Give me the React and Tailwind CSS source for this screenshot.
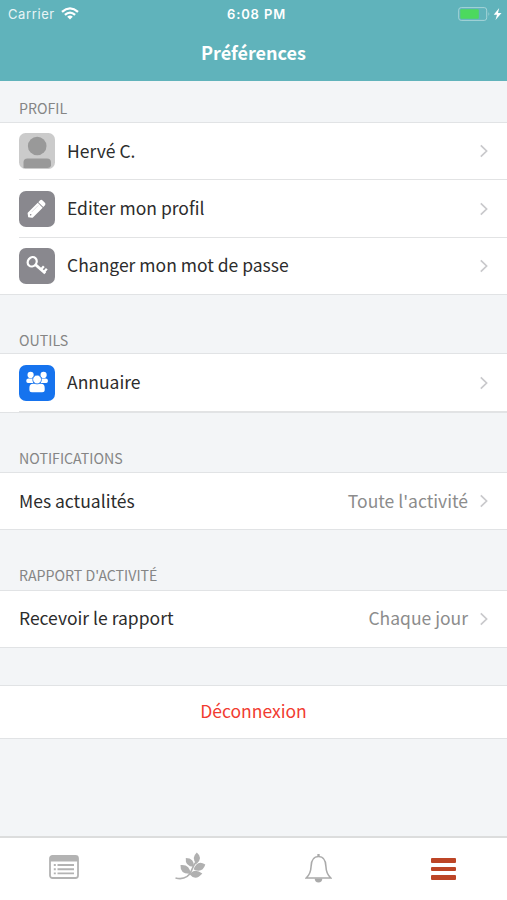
function Chevron() {
  return (
    <svg className="ml-[12px] mr-px h-[14px] w-[8px] shrink-0" viewBox="0 0 8 14" fill="none" stroke="#c9c9cc" strokeWidth="1.700">
      <path d="M.8 1.300 6.600 7 .8 12.700" />
    </svg>
  );
}

function Avatar() {
  return (
    <svg className="h-9 w-9" viewBox="0 0 36 36">
      <rect width="36" height="36" rx="6.500" fill="#cbcbcb" />
      <circle cx="18.200" cy="13" r="9.300" fill="#999" />
      <path d="M4.500 35v-5.500Q4.500 25.500 8.500 25.500H28Q32 25.500 32 29.500V33Q31 35 28.500 35Z" fill="#999" />
    </svg>
  );
}

function Pencil() {
  return (
    <svg className="h-9 w-9" viewBox="0 0 36 36">
      <rect width="36" height="36" rx="7" fill="#89888e" />
      <g transform="translate(9.200 26.200) rotate(-45)" fill="#fff">
        <path d="M0 0 2.200-3Q2.500-3.500 3.200-3.500H17V3.500H3.200Q2.500 3.500 2.200 3Z" />
        <path d="M17.800-3.500H20Q22-3.500 22-1.600V1.600Q22 3.500 20 3.500H17.800Z" />
        <path d="M6-1.200H15.500" stroke="#c9c8cd" strokeWidth=".6" />
        <circle cx="3.500" cy="0" r=".8" fill="#89888e" />
      </g>
    </svg>
  );
}

function Key() {
  return (
    <svg className="h-9 w-9" viewBox="0 0 36 36">
      <rect width="36" height="36" rx="7" fill="#89888e" />
      <g fill="none" stroke="#fff" transform="translate(13.200 13.800) rotate(41)">
        <ellipse rx="4.300" ry="4.900" strokeWidth="2.200" />
        <path d="M4.300 0H17.300" strokeWidth="2.700" />
        <path d="M11.700 0V-4.300M15.600 0V-4.300" strokeWidth="2.300" />
      </g>
    </svg>
  );
}

function People() {
  return (
    <svg className="h-9 w-9" viewBox="0 0 36 36">
      <rect width="36" height="36" rx="7" fill="#1673ee" />
      <g fill="#fff">
        <circle cx="11.600" cy="9.900" r="3.100" />
        <circle cx="24.600" cy="9.900" r="3.100" />
        <path d="M9.500 13.500H14V18H9Q7.300 18 7.300 16.300V15.500Q7.300 13.700 9.500 13.500ZM26.700 13.500H22V18H27.200Q28.900 18 28.900 16.300V15.500Q28.900 13.700 26.700 13.500Z" />
        <path d="M14 18.800H22Q25.700 18.800 25.700 23V24.700Q25.700 27.200 23.200 27.200H12.900Q10.400 27.200 10.400 24.700V23Q10.400 18.800 14 18.800Z" />
        <circle cx="18.100" cy="14.500" r="4.400" stroke="#1673ee" strokeWidth=".8" />
      </g>
    </svg>
  );
}

function Row({ icon, label, value, size, lift = "pb-[1px]" }) {
  return (
    <div className={`flex items-center pl-[19px] ${size}`}>
      {icon}
      <div className={`flex h-full min-w-0 flex-1 items-center pr-[18px] ${icon ? "pl-[12px]" : ""}`}>
        <span className={`flex-1 text-[17.500px] leading-6 text-[#2c2c2c] ${lift}`}>{label}</span>
        {value && <span className={`text-[17.500px] leading-6 text-[#8c8c8c] ${lift}`}>{value}</span>}
        <Chevron />
      </div>
    </div>
  );
}

const Divider = () => <div className="ml-[19px] h-px bg-[#e2e3e4]" />;

function Heading({ children, size, drop = "pb-[4px]" }) {
  return (
    <div className={`flex items-end pl-[19px] text-[14.200px] leading-5 text-[#858585] ${drop} ${size}`}>
      {children}
    </div>
  );
}

function Group({ children }) {
  return <div className="border-y border-[#e1e3e5] bg-white">{children}</div>;
}

export default function App() {
  return (
    <div className="flex h-[900px] w-[507px] flex-col overflow-hidden bg-[#f3f5f7] font-['Noto_Sans_CJK_SC','Noto_Sans',sans-serif]">
      <header className="h-[81px] shrink-0 bg-[#60b3bb] text-white">
        <div className="grid h-[27px] grid-cols-3 items-center font-[Inter,sans-serif] text-[13px] leading-4">
          <div className="flex items-center pl-[8px]">
            <span className="tracking-[0.600px] text-[#e8f5f6]">Carrier</span>
            <svg className="ml-[6px] h-[13px] w-[18px]" viewBox="0 0 18 13" fill="none" stroke="white" strokeWidth="2.300">
              <path d="M1 4.800Q9-2 17 4.800M3.900 7.900Q9 3.400 14.100 7.900" />
              <path d="M6.200 9.700Q9 7.500 11.800 9.700L9 12.500Z" fill="white" stroke="none" />
            </svg>
          </div>
          <span className="pl-[6px] text-center font-semibold tracking-[0.850px]">6:08 PM</span>
          <svg className="ml-auto mr-[5px] h-[14px] w-[44px]" viewBox="0 0 44 14">
            <rect x=".7" y=".6" width="28" height="12.800" rx="2.500" fill="none" stroke="#a6d4d8" />
            <rect x="2.300" y="2.200" width="18.500" height="9.600" rx="1" fill="#4cd95e" />
            <path d="M30.500 5Q32.200 7 30.500 9Z" fill="#a6d4d8" />
            <path d="M41.200 1 35.700 7.800H39L37.500 13 43.500 6H40Z" fill="white" />
          </svg>
        </div>
        <h1 className="text-center text-[18px] font-bold leading-[51px]">Préférences</h1>
      </header>

      <main className="min-h-0 flex-1">
        <Heading size="h-[41px]">PROFIL</Heading>
        <Group>
          <Row icon={<Avatar />} label="Hervé C." size="h-[56px]" />
          <Divider />
          <Row icon={<Pencil />} label="Editer mon profil" size="h-[57px]" lift="pb-[2px]" />
          <Divider />
          <Row icon={<Key />} label="Changer mon mot de passe" size="h-[56px]" lift="pb-[2px]" />
        </Group>
        <Heading size="h-[58px]" drop="pb-[3px]">OUTILS</Heading>
        <Group>
          <Row icon={<People />} label="Annuaire" size="h-[57px]" />
          <Divider />
        </Group>
        <Heading size="h-[59px]">NOTIFICATIONS</Heading>
        <Group>
          <Row label="Mes actualités" value="Toute l'activité" size="h-[56px]" />
        </Group>
        <Heading size="h-[60px]" drop="pb-[5px]">RAPPORT D'ACTIVITÉ</Heading>
        <Group>
          <Row label="Recevoir le rapport" value="Chaque jour" size="h-[56px]" lift="pb-[2px]" />
        </Group>
        <div className="h-[37px]" />
        <Group>
          <button className="block h-[52px] w-full pb-[2px] text-center text-[17.500px] text-[#f13b31]">Déconnexion</button>
        </Group>
      </main>

      <nav className="grid h-[64px] shrink-0 grid-cols-4 border-t-2 border-[#dcdddd] bg-white">
        <div className="pl-[49px] pt-[17px]">
          <svg className="h-[24px] w-[30px]" viewBox="0 0 30 24">
            <rect x="1" y="1" width="28" height="22" rx="2.500" fill="white" stroke="#b3b3b3" strokeWidth="1.800" />
            <path d="M1 6.500V3Q1 1 3 1H27Q29 1 29 3V6.500Z" fill="#b3b3b3" />
            <path d="M4.800 10H6.800M8.500 10H25M4.800 14.200H6.800M8.500 14.200H25M4.800 18.400H6.800M8.500 18.400H25" stroke="#b3b3b3" strokeWidth="1.900" />
          </svg>
        </div>
        <div className="pl-[48px] pt-[14px]">
          <svg className="h-[29px] w-[31px]" viewBox="0 0 31 29" fill="#b0b0b0">
            <path d="M.5 26Q12 28.500 16 19.500L19 13 21.500 9.500" fill="none" stroke="#b0b0b0" strokeWidth="1.700" />
            <path d="M21.800.5Q15.800 6 21.500 12 28.500 6 21.800.5Z" />
            <path d="M10.800 6Q9.800 14.500 18.800 14.800 19.500 6 10.800 6Z" />
            <path d="M5.500 13Q5 22.500 15.500 21.800 15 12 5.500 13Z" />
            <path d="M30.300 12.500Q22 7.500 18.700 17.500 27.500 21.500 30.300 12.500Z" />
            <path d="M27.300 21.500Q19.500 15.500 14.500 22.300 20.500 29.500 27.300 21.500Z" />
          </svg>
        </div>
        <div className="pl-[51px] pt-[15px]">
          <svg className="h-[30px] w-[27px]" viewBox="0 0 28 30" preserveAspectRatio="none" fill="none" stroke="#aaa" strokeWidth="1.600">
            <path d="M1.200 25Q6 21 6.300 13.500C6.500 7 8.500 3.500 14 3.500S21.500 7 21.700 13.500Q22 21 26.800 25Z" />
            <path d="M12.800 3.500V1H15.200V3.500Z" fill="#aaa" stroke="none" />
            <path d="M10 25.500Q10.300 29.500 14 29.500T18 25.500Z" fill="#aaa" stroke="none" />
          </svg>
        </div>
        <div className="flex flex-col gap-[4px] pl-[51px] pt-[20px]">
          <span className="h-[4.500px] w-[25px] rounded-[1px] bg-[#bd4526]" />
          <span className="h-[4.500px] w-[25px] rounded-[1px] bg-[#bd4526]" />
          <span className="h-[4.500px] w-[25px] rounded-[1px] bg-[#bd4526]" />
        </div>
      </nav>
    </div>
  );
}
